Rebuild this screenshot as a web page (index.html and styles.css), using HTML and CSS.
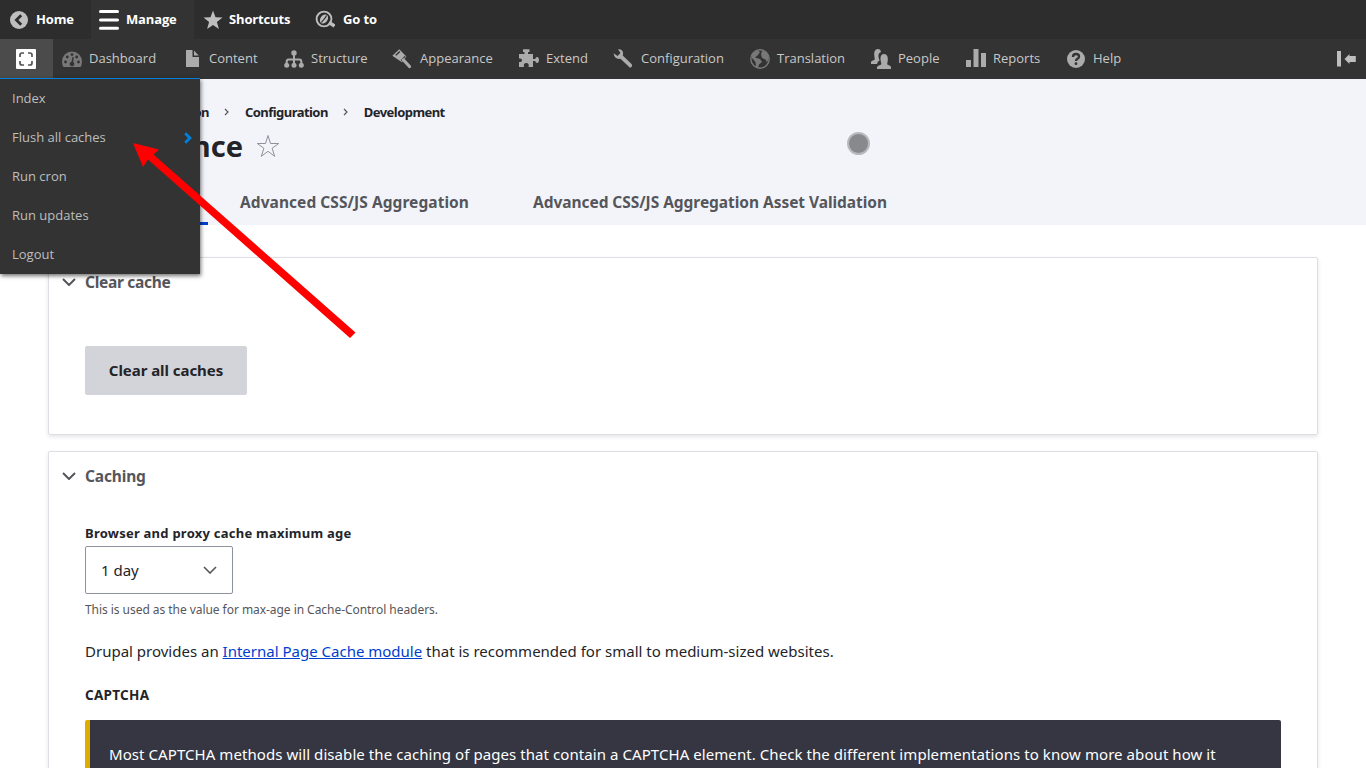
FILE: index.html
```html
<!DOCTYPE html>
<html lang="en">
<head>
<meta charset="utf-8">
<title>Performance</title>
<link rel="stylesheet" href="styles.css">
</head>
<body>
<nav class="bar">
  <a class="tab home"><svg class="ic" viewBox="0 0 20 20"><circle cx="10" cy="10" r="9" fill="#bebebe"/><path d="M12.200 5.200L7.400 10l4.800 4.800" fill="none" stroke="#2d2d2d" stroke-width="2.800"/></svg><span>Home</span></a>
  <a class="tab manage"><svg class="ic" viewBox="0 0 20 20"><path d="M1.500 1.600h17M1.500 10h17M1.500 18.200h17" stroke="#fff" stroke-width="3" stroke-linecap="round"/></svg><span>Manage</span></a>
  <a class="tab shortcuts"><svg class="ic" viewBox="0 0 20 20"><path d="M10 .5l2.500 6.800 7 .2-5.600 4.500 2 7L10 15l-5.900 4 2-7L.5 7.500l7-.2z" fill="#bebebe"/></svg><span>Shortcuts</span></a>
  <a class="tab goto"><svg class="ic" viewBox="0 0 20 20" fill="none" stroke="#bebebe"><circle cx="9" cy="9" r="7.400" stroke-width="1.900"/><ellipse cx="9" cy="9" rx="3.600" ry="5" transform="rotate(35 9 9)" fill="#bebebe" stroke="none"/><path d="M6.500 12.500c1-3 3.500-2.500 5-7" stroke="#2d2d2d" stroke-width="1.100"/><path d="M14 12.500l5.500 3.500" stroke-width="3.400"/></svg><span>Go to</span></a>
</nav>
<nav class="tray">
  <a class="tools"><svg class="ic" viewBox="0 0 20 20"><rect width="20" height="20" rx="1" fill="#fff"/><path d="M4 8V6Q4 4 6 4H8M12 4h2q2 0 2 2V8M16 12v2q0 2-2 2H12M8 16H6q-2 0-2-2V12" fill="none" stroke="#555" stroke-width="1.700"/></svg></a>
  <a class="item i1"><svg class="ic" viewBox="0 0 20 20"><path d="M1.500 18Q0 16 0 12.500a10 10 0 0 1 20 0Q20 16 18.500 18z" fill="#787878"/><g fill="#333"><circle cx="3.500" cy="13" r="1.400"/><circle cx="5.300" cy="8" r="1.400"/><circle cx="10" cy="5.600" r="1.400"/><circle cx="14.700" cy="8" r="1.400"/><circle cx="16.500" cy="13" r="1.400"/><path d="M10.500 8h1.200l-.5 5a2.300 2.300 0 1 1-1.700-.3z"/></g></svg><span>Dashboard</span></a>
  <a class="item i2"><svg class="ic" viewBox="0 0 20 20" fill="#ababab"><path d="M4 1h6.500v7H17v10H4z"/><path d="M12 1.500l4.700 5H12z"/></svg><span>Content</span></a>
  <a class="item i3"><svg class="ic" viewBox="0 0 20 20"><g fill="#ababab"><circle cx="10" cy="4" r="2.700"/><circle cx="2.700" cy="16.300" r="2.500"/><circle cx="10" cy="16.300" r="2.500"/><circle cx="17.300" cy="16.300" r="2.500"/></g><path d="M10 4v12M2.700 16v-3.500q0-2 2-2h10.600q2 0 2 2V16" fill="none" stroke="#ababab" stroke-width="2"/></svg><span>Structure</span></a>
  <a class="item i4"><svg class="ic" viewBox="0 0 20 20"><path d="M7.300.3L14.300 7.500 10 13.300.3 6.800z" fill="#ababab"/><path d="M7.300 2L3.200 6l1 .7 4.200-3.600zM8.800 11.300l4-4.500.7.8-3.900 4.500z" fill="#333"/><path d="M11.500 11l6 6.500" stroke="#ababab" stroke-width="3.200" stroke-linecap="round"/></svg><span>Appearance</span></a>
  <a class="item i5"><svg class="ic" viewBox="0 0 20 20"><path d="M0 5h5.500V3H4V.3h6.500V3H9v2h5v5h2.200q.5-2.300 2.300-2Q20 8.500 20 11t-1.500 3q-1.800.3-2.300-2H14v6H9.500q1-4-2.200-4T5 18H0v-5q3 .5 3-1.800T0 9.500z" fill="#ababab"/></svg><span>Extend</span></a>
  <a class="item i6"><svg class="ic" viewBox="0 0 20 20"><path d="M5 .3Q9-.3 10 3.500q.3 2-.3 3L18.800 15.200q1 2.600-1.800 3.600L7.500 9.800Q1.500 10.700.6 4.300L4.500 7 7.500 4z" fill="#ababab"/></svg><span>Configuration</span></a>
  <a class="item i7"><svg class="ic" viewBox="0 0 20 20"><circle cx="10" cy="10" r="9.200" fill="none" stroke="#787878" stroke-width="1.400"/><path d="M2 6Q4 2 8 1.500L10 3 8 6 5 8.500l5 1.500 2 3-3 2.500L8 19l-2-1-.5-5L2 9zM12 2l4 .5 3 6-2 5-1.500-3L12 9l-1-4z" fill="#787878"/></svg><span>Translation</span></a>
  <a class="item i8"><svg class="ic" viewBox="0 0 20 20" fill="#ababab"><path d="M0 15v-2q0-1 3-2 1.500-.5.5-2.500Q2 0 7 0q2.500 0 3 3-3 1-2.500 5 .5 2 1 3.500-2 .5-2.500 3.500z"/><path d="M6 20v-2q.5-1 3-2 2-.5 1-2.500Q8 5 13 5t3.500 8.500q-1 2 1 2.500 2.500 1 2.500 2v2z"/></svg><span>People</span></a>
  <a class="item i9"><svg class="ic" viewBox="0 0 20 20" fill="#ababab"><path d="M0 11h5v7H0zM7.500 0h5v18h-5zM15 4h5v14h-5z"/></svg><span>Reports</span></a>
  <a class="item i10"><svg class="ic" viewBox="0 0 20 20"><circle cx="10" cy="10" r="9" fill="#ababab"/><path d="M7 8q0-3 3-3t3 2.500q0 1.500-1.500 2.300T10 12" fill="none" stroke="#333" stroke-width="2.300"/><circle cx="10" cy="14.700" r="1.400" fill="#333"/></svg><span>Help</span></a>
  <svg class="toggle" viewBox="0 0 20 16"><path d="M1 0h4v15.500H1zM8.500 8l5-5v2h6.300v6h-6.300v2z" fill="#bebebe"/></svg>
</nav>
<header class="header">
  <div class="crumbs"><span class="c0">Administration</span><svg class="sep" viewBox="0 0 6 8"><path d="M1 1l3 3-3 3" fill="none" stroke="#55565b" stroke-width="1.200"/></svg><span class="c1">Configuration</span><svg class="sep" viewBox="0 0 6 8"><path d="M1 1l3 3-3 3" fill="none" stroke="#55565b" stroke-width="1.200"/></svg><span class="c2">Development</span></div>
  <div class="titlerow"><h1>Performance</h1><svg class="star" viewBox="0 0 24 24"><path d="M12 1.500l2.500 8h8.200l-6.600 4.800 2.600 8-6.700-5-6.700 5 2.600-8L1.300 9.500h8.200z" fill="none" stroke="#8e929c"/></svg></div>
  <div class="tabs"><a class="on">Performance</a><a class="a1">Advanced CSS/JS Aggregation</a><a class="a2">Advanced CSS/JS Aggregation Asset Validation</a></div>
</header>
<main>
  <section class="card clear">
    <h2><svg class="chev" viewBox="0 0 14 8"><path d="M1 1l6 6 6-6" fill="none" stroke="#55565b" stroke-width="2"/></svg><span>Clear cache</span></h2>
    <button><span>Clear all caches</span></button>
  </section>
  <section class="card caching">
    <h2><svg class="chev" viewBox="0 0 14 8"><path d="M1 1l6 6 6-6" fill="none" stroke="#55565b" stroke-width="2"/></svg><span class="h-caching">Caching</span></h2>
    <div class="label"><span>Browser and proxy cache maximum age</span></div>
    <div class="select"><span>1 day</span><svg class="chev" viewBox="0 0 14 8"><path d="M1 1l6 6 6-6" fill="none" stroke="#55565b" stroke-width="1.600"/></svg></div>
    <div class="desc"><span>This is used as the value for max-age in Cache-Control headers.</span></div>
    <p class="para"><span>Drupal provides an <a>Internal Page Cache module</a> that is recommended for small to medium-sized websites.</span></p>
    <div class="captcha"><span>CAPTCHA</span></div>
    <div class="msg"><span>Most CAPTCHA methods will disable the caching of pages that contain a CAPTCHA element. Check the different implementations to know more about how it</span></div>
  </section>
</main>
<div class="menu">
  <a>Index</a><a>Flush all caches<svg class="more" viewBox="0 0 8 12"><path d="M1.200 1.200L6 6l-4.800 4.800" fill="none" stroke="#0080db" stroke-width="2.800"/></svg></a><a>Run cron</a><a>Run updates</a><a>Logout</a>
</div>
<svg class="arrow" viewBox="0 0 1366 768"><path d="M133 143L159 149.500 153.500 154.500 355.500 332.500 350 338 148 159.500 143 167z" fill="#f00"/></svg>
<div class="dot"></div>
</body>
</html>
```
FILE: styles.css
```css
* { box-sizing: border-box; }
body { margin: 0; height: 768px; overflow: hidden; background: #fff; color: #232429; font-family: "Noto Sans", "Open Sans", sans-serif; font-size: 16px; }
svg { display: block; flex: none; }
span { white-space: nowrap; }
.ic { width: 20px; height: 20px; }
.bar { display: flex; height: 39px; background: #2d2d2d; color: #fff; font: 700 13px/39px "Open Sans", sans-serif; letter-spacing: -.15px; }
.tab { display: flex; align-items: center; gap: 7px; }
.home { width: 91px; padding-left: 9px; }
.manage { width: 103px; padding-left: 8px; background: #333; }
.shortcuts { width: 112px; padding-left: 9px; gap: 6px; }
.goto { padding-left: 9px; gap: 8px; }
.tray { display: flex; height: 40px; background: #333; color: #c8c8c8; font: 13px/39px "Open Sans", sans-serif; position: relative; }
.tools { width: 53px; height: 39px; padding: 10px 16px; background: #4b4b4b; }
.item { display: flex; align-items: center; height: 39px; gap: 7px; padding-left: 9px; }
.i1 { width: 120px; }
.i2 { width: 102px; }
.i3 { width: 108px; }
.i4 { width: 127px; gap: 8px; }
.i5 { width: 94px; }
.i6 { width: 137px; gap: 8px; }
.i7 { width: 121px; }
.i8 { width: 95px; }
.i9 { width: 100px; }
.toggle { width: 20px; height: 16px; margin: 12px 10px 0 auto; }
.header { height: 146px; background: #f3f4f9; padding: 0 48px; }
.crumbs { display: flex; align-items: center; height: 66px; font-size: 13px; font-weight: 700; letter-spacing: -.55px; }
.c0 { width: 161px; text-align: right; }
.sep { width: 6px; height: 8px; margin: 0 15px; }
.titlerow { display: flex; align-items: center; height: 36px; margin-top: -17px; }
h1 { width: 195px; margin: 0; display: flex; justify-content: flex-end; font-size: 29px; line-height: 36px; }
.star { width: 24px; height: 24px; margin-left: 13px; }
.tabs { display: flex; height: 61px; line-height: 76px; color: #55565b; font-weight: 700; font-size: 15.500px; }
.tabs a { white-space: nowrap; }
.on { width: 160px; height: 61px; padding: 0 24px; border-bottom: 3px solid #003ecc; overflow: hidden; }
.a1 { width: 293px; padding-left: 32px; letter-spacing: .06px; }
.a2 { padding-left: 32px; letter-spacing: -.05px; }
main { padding: 32px 48px 0; }
.card { border: 1px solid #dedfe4; border-radius: 2px; box-shadow: 0 2px 4px rgba(0,0,0,.1); padding: 0 36px; }
.clear { height: 178px; margin-bottom: 16px; }
.caching { height: 400px; }
h2 { display: flex; align-items: center; gap: 9px; margin: 0 0 0 -23px; height: 48px; font-size: 15.500px; letter-spacing: -.3px; color: #55565b; }
.h-caching { letter-spacing: -.15px; }
.chev { width: 14px; height: 8px; }
button { display: block; width: 162px; height: 49px; margin-top: 40px; padding: 0 0 2px; border: 0; border-radius: 2px; background: #d3d4d9; color: #232429; font: 700 15px "Noto Sans", sans-serif; letter-spacing: -.05px; }
.label { font-size: 13px; font-weight: 700; line-height: 20px; margin-top: 23px; letter-spacing: .24px; }
.select { display: flex; align-items: center; justify-content: space-between; width: 148px; height: 48px; margin-top: 3px; padding: 0 15px; border: 1px solid #8e929c; border-radius: 2px; font-size: 15px; }
.desc { font-size: 12px; line-height: 18px; margin-top: 7px; color: #55565b; letter-spacing: -.05px; }
.para { margin: 20px 0 0; font-size: 15px; line-height: 24px; }
.para a { color: #003ecc; text-decoration: underline; }
.captcha { margin-top: 22px; font-size: 13.500px; font-weight: 700; line-height: 20px; letter-spacing: .3px; }
.msg { margin-top: 15px; height: 80px; width: 1196px; padding: 22px 19px; border-left: 5px solid #e0ac00; border-radius: 2px; background: #353641; color: #fff; font-size: 15px; line-height: 24px; letter-spacing: .07px; }
.menu { position: absolute; left: 0; top: 78px; width: 200px; height: 196px; background: #333; border-top: 1px solid #0080db; box-shadow: 1px 2px 4px rgba(0,0,0,.55); color: #bebebe; font: 13px/39px "Open Sans", sans-serif; }
.menu a { display: flex; align-items: center; justify-content: space-between; height: 39px; padding: 0 8px 0 12px; }
.more { width: 8px; height: 12px; }
.arrow { position: absolute; left: 0; top: 0; width: 1366px; height: 768px; }
.dot { position: absolute; left: 847px; top: 132px; width: 23px; height: 23px; border-radius: 50%; background: #88898d; border: 2px solid #b8b9bd; }
```
